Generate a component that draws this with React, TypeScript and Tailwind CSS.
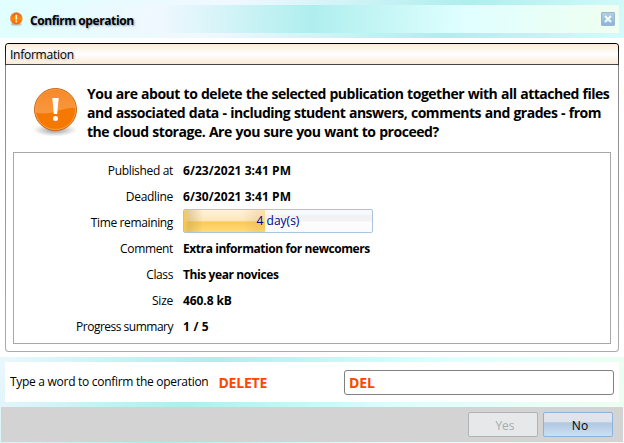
import React from "react";

const rows: { label: string; value: string; labelClass: string; valueClass: string }[] = [
  { label: "Published at", value: "6/23/2021 3:41 PM", labelClass: "tracking-[-0.330px]", valueClass: "tracking-[0.060px]" },
  { label: "Deadline", value: "6/30/2021 3:41 PM", labelClass: "tracking-[-0.300px]", valueClass: "tracking-[0.060px]" },
  { label: "Time remaining", value: "", labelClass: "tracking-[-0.360px]", valueClass: "" },
  { label: "Comment", value: "Extra information for newcomers", labelClass: "tracking-[-0.350px]", valueClass: "tracking-[-0.420px]" },
  { label: "Class", value: "This year novices", labelClass: "tracking-[-0.400px]", valueClass: "tracking-[-0.400px]" },
  { label: "Size", value: "460.8 kB", labelClass: "tracking-[-0.250px]", valueClass: "tracking-[-0.080px]" },
  { label: "Progress summary", value: "1 / 5", labelClass: "tracking-[-0.500px]", valueClass: "tracking-[0.200px]" },
];

function SmallAlert() {
  return (
    <svg width="14" height="14" viewBox="0 0 14 14" className="shrink-0">
      <defs>
        <linearGradient id="small" x1="0" y1="0" x2="0" y2="1">
          <stop offset="0" stopColor="#e2601c" />
          <stop offset=".5" stopColor="#fb8a08" />
          <stop offset="1" stopColor="#ff5a00" />
        </linearGradient>
      </defs>
      <ellipse cx="7.300" cy="12.200" rx="5.5" ry="1.6" fill="#8b9999" opacity=".5" />
      <circle cx="7.300" cy="6.500" r="6" fill="url(#small)" stroke="#f0956a" strokeWidth=".6" />
      <path d="M6.300 2.700h2l-.3 5H6.600z" fill="#fff3c0" />
      <circle cx="7.300" cy="9.600" r="1" fill="#fff3c0" />
    </svg>
  );
}

function LargeAlert() {
  return (
    <svg width="50" height="54" viewBox="0 0 50 54" className="shrink-0">
      <defs>
        <radialGradient id="shade">
          <stop offset="0" stopColor="#555" stopOpacity=".65" />
          <stop offset="1" stopColor="#777" stopOpacity="0" />
        </radialGradient>
        <linearGradient id="gloss" x1="0" y1="0" x2="0" y2="1">
          <stop offset="0" stopColor="#f58a2a" />
          <stop offset="1" stopColor="#f9983f" />
        </linearGradient>
      </defs>
      <ellipse cx="25" cy="45" rx="22" ry="6.500" fill="url(#shade)" />
      <circle cx="25.500" cy="24.500" r="21" fill="#f57900" stroke="#c9661b" />
      <path d="M5.500 27.500a20 20 0 1 1 39.900-4.500c-10-1-18 4-26 5-5 .5-10 .5-13.900-.5z" fill="url(#gloss)" />
      <circle cx="25.500" cy="24.500" r="20" fill="none" stroke="#fba957" strokeWidth=".8" />
      <path d="M22.300 13h6.400l-1.500 16h-3.400z" fill="white" />
      <circle cx="25.500" cy="33.500" r="2.500" fill="white" />
    </svg>
  );
}

function RemainingBar() {
  return (
    <div className="relative h-6 w-[190px] overflow-hidden rounded-[2px] border border-[#a9c4df] bg-[linear-gradient(#fafafa_0%,#f8f8f8_20%,#f1f1f1_24%,#f4f4f4_50%,#fdfdfd_56%,#fbfbfb_100%)]">
      <div className="h-full w-[81px] bg-[linear-gradient(90deg,#fbc94d_0%,#c4a05470_6%,#c4a05400_24%,#c4a05400_72%,#c4a05430_90%,#fbc94d60_100%),linear-gradient(#fff3dc_0%,#fce5b8_51%,#fbc956_53%,#ffdc79_100%)]" />
      <span className="absolute inset-x-0 top-[3px] text-center text-[12px] leading-[16px] text-[#00008b]">4 day(s)</span>
    </div>
  );
}

export default function App() {
  return (
    <main className="flex h-[443px] w-[624px] flex-col overflow-hidden whitespace-nowrap bg-[linear-gradient(125.4deg,#e0ffff,#f0f8ff_25%,#afeeee_50%,#e0ffff_75%,#f0fff0)] font-['Open_Sans','Noto_Sans',sans-serif] text-[12px] text-black">
      <header className="h-[38px] p-[5px]">
        <div className="flex h-7 items-center bg-[linear-gradient(92.6deg,#e0ffff,#f0f8ff_25%,#afeeee_50%,#e0ffff_75%,#f0fff0)] pr-[4px] pl-[4px]">
          <SmallAlert />
          <h1 className="ml-[7px] pt-[3px] text-[12px] font-bold tracking-[-0.410px] [text-shadow:1px_1px_2px_#8899aa]">Confirm operation</h1>
          <button className="ml-auto flex size-[14px] items-center justify-center rounded-[1px] border border-[#98b8cf] bg-[linear-gradient(#b1cfdf,#8eb3d8)]">
            <svg width="8" height="8" viewBox="0 0 8 8"><path d="M1 1l6 6M7 1L1 7" stroke="#f3fcff" strokeWidth="2" /></svg>
          </button>
        </div>
      </header>

      <section className="h-[314px] bg-white px-[5px] pt-[5px] pb-1">
        <div className="h-[309px] w-[614px] rounded-[4px] bg-[linear-gradient(#000_0,#3b3b3b_22px,#888_23px,#aaa_100%)] p-px">
          <div className="h-full overflow-hidden rounded-[3px] bg-white">
            <h2 className="h-[21px] border-b border-[#454545] bg-[linear-gradient(#faebd7,#fff_50%,#faebd7)] pl-[4px] leading-[22px] tracking-[-0.250px] [text-shadow:1px_1px_2px_#bbb]">Information</h2>
            <div className="flex h-[87px] pl-[24px]">
              <div className="mt-[20px]"><LargeAlert /></div>
              <div className="mt-[19px] ml-[7px] text-[14px] leading-[19px] font-bold [word-spacing:0.5px]">
                <p className="tracking-[-0.485px]">You are about to delete the selected publication together with all attached files</p>
                <p className="tracking-[-0.475px]">and associated data - including student answers, comments and grades - from</p>
                <p className="tracking-[-0.470px]">the cloud storage. Are you sure you want to proceed?</p>
              </div>
            </div>
            <dl className="ml-[7px] h-[192px] w-[598px] border border-[#a8a8a8] pt-[5px]">
              {rows.map((r) => (
                <div key={r.label} className="flex h-[26px] items-center">
                  <dt className={`w-[159px] text-right ${r.labelClass}`}>{r.label}</dt>
                  <dd className={`ml-[10px] font-bold ${r.valueClass}`}>
                    {r.value || <div className="-mt-[4px] font-normal"><RemainingBar /></div>}
                  </dd>
                </div>
              ))}
            </dl>
          </div>
        </div>
      </section>

      <section className="h-[55px] bg-[linear-gradient(white,white)] bg-[length:100%_5px] bg-no-repeat px-[5px] pt-[10px] pb-[5px]">
        <div className="flex h-[40px] items-center bg-white px-[5px]">
          <label htmlFor="confirmation" className="tracking-[-0.290px]">Type a word to confirm the operation</label>
          <strong className="ml-[10px] text-[14px] tracking-[-0.200px] text-[#ff4500]">DELETE</strong>
          <input id="confirmation" defaultValue="DEL" className="ml-auto h-[25px] w-[270px] rounded-[3px] border border-[#808080] bg-white px-[4px] text-[14px] font-bold tracking-[-0.100px] text-[#ff4500] outline-none" />
        </div>
      </section>

      <footer className="mx-px flex h-[35px] items-center justify-end gap-[5px] bg-[#d3d3d3] pr-[10px]">
        <button disabled className="h-[25px] w-[70px] rounded-[2px] border border-[#b0b3b4] bg-[#e6e8ea] pt-[2px] pl-[4px] text-[#a8abad]">Yes</button>
        <button className="h-[25px] w-[70px] rounded-[2px] border border-[#8db2dd] bg-[linear-gradient(#e2e5ed_0%,#dce2ec_40%,#b0c7e2_42%,#cce0f2_100%)] pt-[2px] pl-[4px]">No</button>
      </footer>
    </main>
  );
}
